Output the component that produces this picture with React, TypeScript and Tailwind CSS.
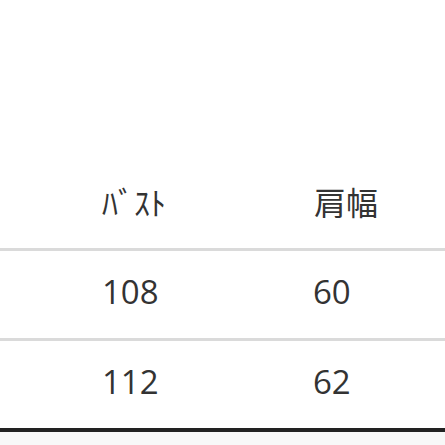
const rows = [
    { bust: '108', shoulder: '60' },
    { bust: '112', shoulder: '62' },
];

export default function App() {
    return (
        <div className="flex h-[445px] w-[445px] flex-col overflow-hidden bg-white text-[#333]">
            <div className="h-[161px] shrink-0" />

            <div
                className="flex h-[90px] shrink-0 items-center border-b-[3px] border-[#dadada] pb-[8px] pl-[102px] text-[32px] leading-none"
                style={{ fontFamily: '"Noto Sans CJK JP", "Noto Sans", sans-serif' }}
            >
                <div className="w-[212px]">ﾊﾞｽﾄ</div>
                <div>肩幅</div>
            </div>

            {rows.map((row, i) => (
                <div
                    key={row.bust}
                    className={
                        i === rows.length - 1
                            ? 'flex h-[91px] shrink-0 items-center border-b-4 border-[#222] pb-[6px] pl-[102px] text-[33px] leading-none'
                            : 'flex h-[90px] shrink-0 items-center border-b-[3px] border-[#dadada] pb-[6px] pl-[102px] text-[33px] leading-none'
                    }
                    style={{ fontFamily: '"Open Sans", sans-serif' }}
                >
                    <div className="w-[211px]">{row.bust}</div>
                    <div>{row.shoulder}</div>
                </div>
            ))}

            <div className="flex-1 bg-[#f8f8f8]" />
        </div>
    );
}
